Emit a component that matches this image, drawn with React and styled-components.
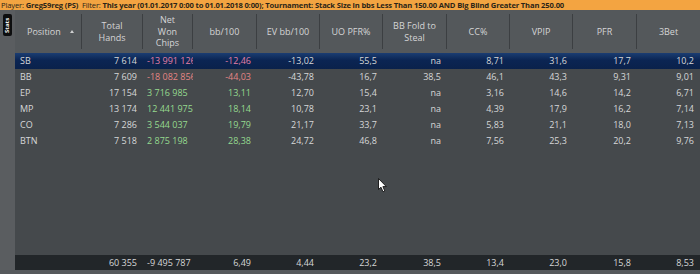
import React from "react";
import styled, { createGlobalStyle } from "styled-components";

const Global = createGlobalStyle`
  html, body {
    margin: 0;
    padding: 0;
    background: #45494c;
    overflow: hidden;
  }
  body {
    font-family: "Open Sans", "Liberation Sans", sans-serif;
  }
`;

// column widths measured from the grid: Position .. 3Bet
const COLS = "67px 61px 50px 64px 63px 63px 64px 63px 63px 64px 63px";

const headers = [
  { label: "Position", align: "left", sort: true },
  { label: "Total\nHands" },
  { label: "Net\nWon\nChips" },
  { label: "bb/100" },
  { label: "EV bb/100" },
  { label: "UO PFR%" },
  { label: "BB Fold to\nSteal" },
  { label: "CC%" },
  { label: "VPIP" },
  { label: "PFR" },
  { label: "3Bet" },
];

const rows = [
  ["SB", "7 614", "-13 991 126", "-12,46", "-13,02", "55,5", "na", "8,71", "31,6", "17,7", "10,2"],
  ["BB", "7 609", "-18 082 856", "-44,03", "-43,78", "16,7", "38,5", "46,1", "43,3", "9,31", "9,01"],
  ["EP", "17 154", "3 716 985", "13,11", "12,70", "15,4", "na", "3,16", "14,6", "14,2", "6,71"],
  ["MP", "13 174", "12 441 975", "18,14", "10,78", "23,1", "na", "4,39", "17,9", "16,2", "7,14"],
  ["CO", "7 286", "3 544 037", "19,79", "21,17", "33,7", "na", "5,83", "21,1", "18,0", "7,13"],
  ["BTN", "7 518", "2 875 198", "28,38", "24,72", "46,8", "na", "7,56", "25,3", "20,2", "9,76"],
];

const totals = ["", "60 355", "-9 495 787", "6,49", "4,44", "23,2", "38,5", "13,4", "23,0", "15,8", "8,53"];

const tone = (col, value, selected) => {
  if (col !== 2 && col !== 3) return "plain";
  if (value.startsWith("-")) return selected ? "negSel" : "neg";
  return "pos";
};

const TONES = {
  plain: "#d6d7d8",
  neg: "#e48585",
  negSel: "#e47fa6",
  pos: "#95d98f",
};

const Page = styled.div`
  width: 700px;
  height: 274px;
  display: flex;
  flex-direction: column;
  overflow: hidden;
`;

const FilterBar = styled.div`
  height: 10px;
  background: #f3a441;
  color: #2b2418;
  font-size: 7.6px;
  line-height: 10px;
  white-space: nowrap;
  overflow: hidden;
  padding-left: 1px;
  letter-spacing: -0.15px;

  b {
    font-weight: 700;
  }
`;

const Main = styled.div`
  flex: 1;
  display: flex;
  min-height: 0;
`;

const SideStrip = styled.div`
  width: 15px;
  background: #5a5d60;
  display: flex;
  justify-content: center;
  padding-top: 4px;
  box-sizing: border-box;
`;

const StatsTab = styled.div`
  width: 9px;
  height: 22px;
  background: #0d0e0f;
  border-radius: 2px;
  color: #f2f2f2;
  font-size: 6px;
  font-weight: 700;
  writing-mode: vertical-rl;
  transform: rotate(180deg);
  display: flex;
  align-items: center;
  justify-content: center;
  line-height: 9px;
`;

const Table = styled.div`
  flex: 1;
  display: flex;
  flex-direction: column;
  min-width: 0;
`;

const HeaderRow = styled.div`
  height: 43px;
  display: grid;
  grid-template-columns: ${COLS};
  background: #54585b;
  align-items: center;
`;

const HeaderCell = styled.div`
  height: 35px;
  display: flex;
  align-items: center;
  justify-content: ${(p) => (p.$align === "left" ? "flex-start" : "center")};
  padding-left: ${(p) => (p.$align === "left" ? "12px" : "0")};
  border-right: ${(p) => (p.$last ? "none" : "1px solid #3c3f42")};
  color: #d4d5d6;
  font-size: 9px;
  line-height: 11.7px;
  text-align: center;
  white-space: pre-line;
  position: relative;
`;

const SortArrow = styled.span`
  position: absolute;
  left: 55px;
  top: 16px;
  width: 0;
  height: 0;
  border-left: 2.5px solid transparent;
  border-right: 2.5px solid transparent;
  border-bottom: 3px solid #cfd0d1;
`;

const Body = styled.div`
  flex: 1;
  background: #45494c;
  position: relative;
`;

const Row = styled.div`
  height: 16px;
  display: grid;
  grid-template-columns: ${COLS};
  align-items: center;
  background: ${(p) =>
    p.$selected ? "linear-gradient(#1b3d72, #0b2553 45%, #0a214b)" : "transparent"};
`;

const Cell = styled.div`
  font-size: 9px;
  line-height: 16px;
  white-space: nowrap;
  overflow: hidden;
  text-align: ${(p) => p.$align};
  padding: 0 ${(p) => (p.$align === "right" ? "6px" : "0")} 0
    ${(p) => (p.$align === "left" ? (p.$first ? "5px" : "4px") : "0")};
  color: ${(p) => TONES[p.$tone]};
`;

const FooterRow = styled.div`
  height: 15px;
  display: grid;
  grid-template-columns: ${COLS};
  align-items: center;
  background: #222629;
`;

const BottomStrip = styled.div`
  height: 4px;
  background: #56595c;
`;

const Cursor = styled.svg`
  position: absolute;
  left: 363px;
  top: 125px;
`;

const alignFor = (col) => (col === 0 || col === 2 ? "left" : "right");

export default function App() {
  return (
    <>
      <Global />
      <Page>
        <FilterBar>
          Player: <b>Greg59reg (PS)</b>&nbsp;&nbsp;Filter:{" "}
          <b>
            This year (01.01.2017 0:00 to 01.01.2018 0:00); Tournament: Stack Size in bbs Less
            Than 150.00 AND Big Blind Greater Than 250.00
          </b>
        </FilterBar>
        <Main>
          <SideStrip>
            <StatsTab>Stats</StatsTab>
          </SideStrip>
          <Table>
            <HeaderRow>
              {headers.map((h, i) => (
                <HeaderCell key={h.label} $align={h.align} $last={i === headers.length - 1}>
                  {h.label}
                  {h.sort && <SortArrow />}
                </HeaderCell>
              ))}
            </HeaderRow>
            <Body>
              {rows.map((r, ri) => (
                <Row key={r[0]} $selected={ri === 0}>
                  {r.map((v, ci) => (
                    <Cell
                      key={ci}
                      $align={alignFor(ci)}
                      $first={ci === 0}
                      $tone={tone(ci, v, ri === 0)}
                    >
                      {v}
                    </Cell>
                  ))}
                </Row>
              ))}
              <Cursor width="10" height="15" viewBox="0 0 10 15">
                <path
                  d="M0.5 0.5 L0.5 11.5 L3 9.2 L5 13.8 L6.8 13 L4.9 8.6 L8.3 8.6 Z"
                  fill="#ffffff"
                  stroke="#111"
                  strokeWidth="0.9"
                  strokeLinejoin="round"
                />
              </Cursor>
            </Body>
            <FooterRow>
              {totals.map((v, ci) => (
                <Cell key={ci} $align={alignFor(ci)} $tone="plain">
                  {v}
                </Cell>
              ))}
            </FooterRow>
          </Table>
        </Main>
        <BottomStrip />
      </Page>
    </>
  );
}
